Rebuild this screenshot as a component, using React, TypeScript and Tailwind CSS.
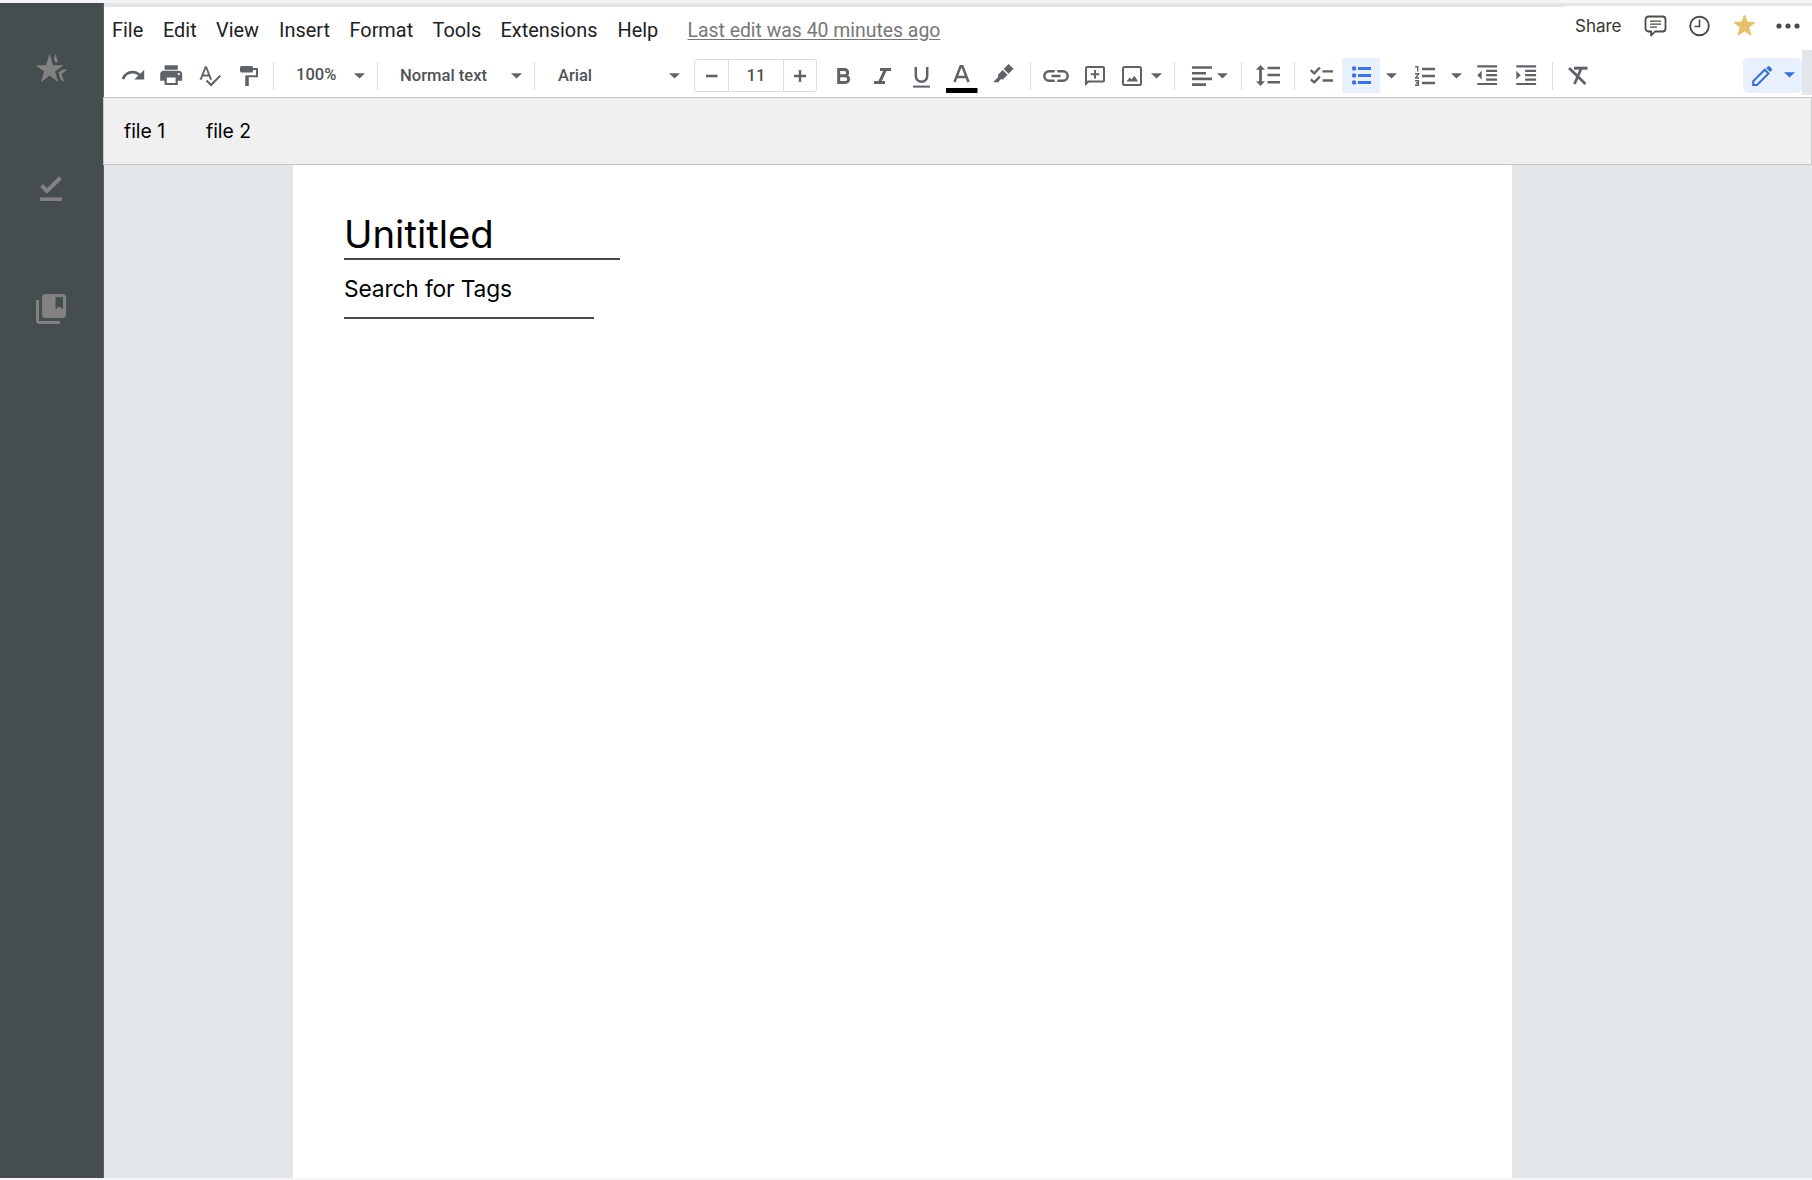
import type { ReactNode } from "react";
import {
  MdCollectionsBookmark,
  MdFormatIndentDecrease,
  MdFormatIndentIncrease,
  MdHotelClass,
  MdPrint,
  MdRedo,
  MdSpellcheck,
} from "react-icons/md";

function Slot({ w, children }: { w: string; children?: ReactNode }) {
  return <div className={`flex h-[35px] shrink-0 items-center justify-center ${w}`}>{children}</div>;
}

function Sep({ w }: { w: string }) {
  return (
    <Slot w={w}>
      <span className="h-[28px] w-px bg-[#dadce0]" />
    </Slot>
  );
}

function Caret() {
  return (
    <svg width="11" height="6" viewBox="0 0 11 6" fill="currentColor" className="block shrink-0">
      <path d="M0 .3h11L5.500 5.600z" />
    </svg>
  );
}

function Draw({ w, h, children }: { w: number; h: number; children: ReactNode }) {
  return (
    <svg width={w} height={h} viewBox={`0 0 ${w} ${h}`} fill="none" stroke="currentColor" className="block shrink-0">
      {children}
    </svg>
  );
}

const menu = [
  { label: "File", w: "w-[51px]" },
  { label: "Edit", w: "w-[53px]" },
  { label: "View", w: "w-[63px]" },
  { label: "Insert", w: "w-[70.500px]" },
  { label: "Format", w: "w-[83px]" },
  { label: "Tools", w: "w-[68px]" },
  { label: "Extensions", w: "w-[117px]" },
  { label: "Help", w: "w-[70px]" },
];

function Sidebar() {
  return (
    <aside className="flex w-[104px] shrink-0 flex-col items-center border-r border-[#5b6264] bg-[#464d4f] pr-[1px] text-[#828282]">
      <MdHotelClass className="mt-[48px] size-[34px]" />
      <div className="mt-[91px]">
        <Draw w={22} h={26}>
          <path d="M1.500 9.500 7 15 20.500 1.800" strokeWidth="4" />
          <path d="M0 23.200h22" strokeWidth="3.600" />
        </Draw>
      </div>
      <MdCollectionsBookmark className="mt-[89px] size-[36px]" />
    </aside>
  );
}

function MenuBar() {
  return (
    <div className="flex h-[43px] shrink-0 bg-white pl-[8px] font-[Roboto,sans-serif] text-[19.900px] leading-[22px] text-[#202124]">
      <nav className="flex pt-[13px]">
        {menu.map((m) => (
          <span key={m.label} className={`shrink-0 ${m.w}`}>
            {m.label}
          </span>
        ))}
        <span className="text-[19.400px] whitespace-nowrap text-[#777] underline underline-offset-2">
          Last edit was 40 minutes ago
        </span>
      </nav>
      <div className="ml-auto flex h-[37px] items-center pr-[12px] text-[#4b4a45]">
        <span className="w-[69px] font-[Inter,sans-serif] text-[17px] text-[#37352f]">Share</span>
        <Draw w={23} h={22}>
          <path
            d="M4.500 1.500h14a3 3 0 0 1 3 3v9a3 3 0 0 1-3 3H11l-3.800 4v-4H4.500a3 3 0 0 1-3-3v-9a3 3 0 0 1 3-3z"
            strokeWidth="1.800"
            strokeLinejoin="round"
          />
          <path d="M6 6.200h11M6 9.200h11M6 12.200h7" strokeWidth="1.200" />
        </Draw>
        <span className="w-[22px]" />
        <Draw w={21} h={22}>
          <circle cx="10.500" cy="11" r="9.300" strokeWidth="1.900" />
          <path d="M10.500 4.500v7h-5" strokeWidth="1.600" />
        </Draw>
        <span className="w-[23px]" />
        <svg width="23" height="23" viewBox="0 0 23 23" fill="#e8c06c">
          <path
            d="M11.500 1l2.600 7.100 7.700.3-6 4.800 2.100 8-6.400-4.400-6.400 4.400 2.100-8-6-4.800 7.700-.3z"
            stroke="#e8c06c"
            strokeWidth="1"
            strokeLinejoin="round"
          />
        </svg>
        <span className="w-[20px]" />
        <svg width="24" height="6" viewBox="0 0 24 6" fill="currentColor">
          <circle cx="3" cy="3" r="2.600" />
          <circle cx="12" cy="3" r="2.600" />
          <circle cx="21" cy="3" r="2.600" />
        </svg>
      </div>
    </div>
  );
}

function Toolbar() {
  return (
    <div className="flex h-[47px] shrink-0 bg-white font-[Roboto,sans-serif] text-[16.500px] font-medium text-[#5f6368]">
      <div className="flex flex-1 items-start pt-[8px] pl-[10px]">
        <Slot w="w-[38px]"><MdRedo className="size-[26.400px]" /></Slot>
        <Slot w="w-[38px]"><MdPrint className="size-[26.400px]" /></Slot>
        <Slot w="w-[39px]"><MdSpellcheck className="size-[25px]" /></Slot>
        <Slot w="w-[39px]">
          <Draw w={18} h={20}>
            <path d="M1.500 0h10a1.500 1.500 0 0 1 1.500 1.500v3.500A1.500 1.500 0 0 1 11.500 6.500h-10A1.500 1.500 0 0 1 0 5V1.500A1.500 1.500 0 0 1 1.500 0z" fill="currentColor" stroke="none" />
            <path d="M13 3h4v7.300H7V20" strokeWidth="2" />
            <path d="M7 10v10" strokeWidth="3.600" />
          </Draw>
        </Slot>
        <Sep w="w-[11px]" />
        <div className="h-[35px] w-[69px] shrink-0 pl-[17px] leading-[34px] text-[#505356]">100%</div>
        <Slot w="w-[23px]"><Caret /></Slot>
        <Sep w="w-[12px]" />
        <div className="h-[35px] w-[121px] shrink-0 pl-[17px] text-[16.600px] leading-[35px] whitespace-nowrap text-[#505356]">Normal text</div>
        <Slot w="w-[24px]"><Caret /></Slot>
        <Sep w="w-[13px]" />
        <div className="h-[35px] w-[121px] shrink-0 pl-[17px] leading-[35px] text-[#505356]">Arial</div>
        <Slot w="w-[24px]"><Caret /></Slot>

        <div className="mt-[1px] ml-[8px] flex h-[33px] w-[123px] shrink-0 rounded-[3px] border border-[#dadce0]">
          <div className="flex w-[34px] items-center justify-center border-r border-[#dadce0]">
            <Draw w={12} h={12}><path d="M0 6h11.500" strokeWidth="2.600" /></Draw>
          </div>
          <div className="flex flex-1 items-center justify-center pt-[2px] text-[#505356]">11</div>
          <div className="flex w-[33px] items-center justify-center border-l border-[#dadce0]">
            <Draw w={12} h={12}><path d="M0 6h12M6 0v12" strokeWidth="2.400" /></Draw>
          </div>
        </div>

        <div className="w-[8px] shrink-0" />
        <Slot w="w-[37px]">
          <Draw w={14} h={16}>
            <path d="M1.700 1.500h5.800a3.100 3.100 0 0 1 0 6.300H1.700zM1.700 7.800h6.600a3.300 3.300 0 0 1 0 6.700H1.700z" strokeWidth="3" />
          </Draw>
        </Slot>
        <Slot w="w-[41px]">
          <Draw w={17} h={16}>
            <path d="M6 1.500h11M0 14.500h11M11.500 1.500 5.500 14.500" strokeWidth="3" />
          </Draw>
        </Slot>
        <Slot w="w-[37px]">
          <div className="mt-[4px]">
            <Draw w={17} h={21}>
              <path d="M2.800 0v9a5.700 5.700 0 0 0 11.400 0V0" strokeWidth="2.500" />
              <path d="M0 19.600h17" strokeWidth="2" />
            </Draw>
          </div>
        </Slot>
        <Slot w="w-[43px]">
          <div className="mt-[6px]">
            <Draw w={32} h={28}>
              <path d="M8.500 17 14.700 1h1.600L22.500 17M10.700 12h9.600" strokeWidth="2.500" />
              <path d="M0 25.500h31.500" stroke="#000" strokeWidth="5" />
            </Draw>
          </div>
        </Slot>
        <Slot w="w-[41px]">
          <div className="-mt-[5px]">
            <svg width="21" height="19" viewBox="0 0 21 19" fill="currentColor" className="block">
              <path d="M15.500 0 20.500 4.800 15.600 9.700 10.700 5z" />
              <path d="M9.700 6 14.600 10.800 9.800 15.600 7.600 15.300 5.300 18.200H0L5.200 12.900 5 10.700z" />
            </svg>
          </div>
        </Slot>
        <Sep w="w-[12px]" />
        <Slot w="w-[39px]">
          <Draw w={26} h={12}>
            <path d="M11.700 1.300H6A4.700 4.700 0 0 0 6 10.700h5.700M14.300 1.300H20a4.700 4.700 0 0 1 0 9.400h-5.700M8.500 6h9" strokeWidth="2.500" />
          </Draw>
        </Slot>
        <Slot w="w-[39px]">
          <Draw w={20} h={20}>
            <path d="M1 17.500V2a1 1 0 0 1 1-1h16a1 1 0 0 1 1 1v12.500a1 1 0 0 1-1 1H3z" strokeWidth="2" />
            <path d="M0 20V15.500h4.500z" fill="currentColor" stroke="none" />
            <path d="M10 4v8.500M5.700 8.200h8.600" strokeWidth="2" />
          </Draw>
        </Slot>
        <Slot w="w-[36px]">
          <Draw w={20} h={20}>
            <rect x="1" y="1" width="18" height="18" rx="1.500" strokeWidth="2" />
            <path d="M4.500 15.500 7.700 11.500 9.500 13.500 12.500 9.800 16 15.500z" fill="currentColor" stroke="none" />
          </Draw>
        </Slot>
        <Slot w="w-[12px]"><Caret /></Slot>
        <Sep w="w-[25px]" />
        <Slot w="w-[29px]">
          <Draw w={20} h={20}>
            <path d="M0 1.500h20M0 7.200h14M0 12.900h20M0 18.600h14" strokeWidth="2.600" />
          </Draw>
        </Slot>
        <Slot w="w-[13px]"><Caret /></Slot>
        <Sep w="w-[24px]" />
        <Slot w="w-[30px]">
          <Draw w={24} h={21}>
            <path d="M11.500 3h12.500M11.500 10h12.500M11.500 17.300h12.500" strokeWidth="2.600" />
            <path d="M4.500 3.500v14" strokeWidth="2.800" />
            <path d="M4.500 0 9 4.800H0zM4.500 21 9 16.200H0z" fill="currentColor" stroke="none" />
          </Draw>
        </Slot>
        <Sep w="w-[23px]" />
        <Slot w="w-[30px]">
          <Draw w={23} h={20}>
            <path d="M12.500 5.300H23M12.500 14.500H23" strokeWidth="2.300" />
            <path d="M.8 4.200 4.200 7.300 9.900 1.500M.8 13.300 4.200 16.400 9.900 10.600" strokeWidth="2.300" />
          </Draw>
        </Slot>
        <div className="w-[6px] shrink-0" />
        <div className="shrink-0 rounded-[2px] bg-[#e8f0fe] text-[#3d73dd]">
          <Slot w="w-[38px]">
            <Draw w={19} h={19}>
              <path d="M6 2.500h13M6 9.500h13M6 16.500h13" strokeWidth="2.800" />
              <circle cx="2.100" cy="2.500" r="2.200" fill="currentColor" stroke="none" />
              <circle cx="2.100" cy="9.500" r="2.200" fill="currentColor" stroke="none" />
              <circle cx="2.100" cy="16.500" r="2.200" fill="currentColor" stroke="none" />
            </Draw>
          </Slot>
        </div>
        <div className="w-[5px] shrink-0" />
        <Slot w="w-[13px]"><Caret /></Slot>
        <Slot w="w-[53px]">
          <Draw w={20} h={20}>
            <path d="M7 3h13M7 10h13M7 17h13" strokeWidth="2.600" />
            <path d="M.2.700h2.500V5.500M0 7.800h3.700L.5 12H4M0 14.700h3.400v4.500H0M1 17h2.400" strokeWidth="1.400" />
          </Draw>
        </Slot>
        <Slot w="w-[10px]"><Caret /></Slot>
        <div className="w-[7px] shrink-0" />
        <Slot w="w-[39px]"><MdFormatIndentDecrease className="size-[26.400px]" /></Slot>
        <Slot w="w-[39px]"><MdFormatIndentIncrease className="size-[26.400px]" /></Slot>
        <Sep w="w-[12px]" />
        <Slot w="w-[40px]">
          <Draw w={20} h={19}>
            <path d="M6 2.200h13.500" strokeWidth="3" />
            <path d="M13 3 6.500 18M1 2 17.500 18" strokeWidth="2.800" />
          </Draw>
        </Slot>

        <div className="ml-auto flex h-[35px] w-[59px] shrink-0 items-center rounded-[5px] bg-[#e8f0fe] pl-[9px] text-[#3b6fd1]">
          <Draw w={20} h={20}>
            <path d="M1.200 15.200 12.700 3.700l3.800 3.800L5 19H1.200z" strokeWidth="2" />
            <path d="M14.200 2.200 15.800.6a1.300 1.300 0 0 1 1.900 0l2 2a1.300 1.300 0 0 1 0 1.900l-1.600 1.600z" fill="currentColor" stroke="none" />
          </Draw>
          <div className="mb-px ml-[12px]"><Caret /></div>
        </div>
      </div>
      <div className="h-[45px] w-[10px] shrink-0 bg-[#e2e6e9]" />
    </div>
  );
}

export default function App() {
  return (
    <div className="flex h-[1180px] w-[1812px] flex-col overflow-hidden bg-[#f5f5f5] pt-[3px]">
      <div className="flex h-[1175px] shrink-0">
        <Sidebar />
        <main className="flex flex-1 flex-col bg-[#e2e6e9] pt-[3px]">
          <div className="ml-auto h-px w-[247px] shrink-0 bg-white" />
          <MenuBar />
          <Toolbar />
          <div className="-ml-px flex h-[68px] shrink-0 items-center gap-[35px] border border-[#c7c7c7] bg-[#f0f0f0] pt-[2px] pl-[20px] font-[Inter,sans-serif] text-[19.400px] text-black">
            <span className="w-[47px] whitespace-nowrap">file 1</span>
            <span className="whitespace-nowrap">file 2</span>
          </div>
          <section className="ml-[189px] flex w-[1219px] flex-1 flex-col items-start bg-white pt-[44px] pl-[51px] font-[Inter,sans-serif] text-black">
            <h1 className="h-[51px] w-[276px] border-b-2 border-[#4a4a4a] text-[38.300px] leading-[51px] font-normal">Unititled</h1>
            <p className="h-[59px] w-[250px] border-b-2 border-[#4a4a4a] pt-[12px] text-[22.800px] leading-[34px] tracking-[-0.16px]">
              Search for Tags
            </p>
          </section>
        </main>
      </div>
    </div>
  );
}
